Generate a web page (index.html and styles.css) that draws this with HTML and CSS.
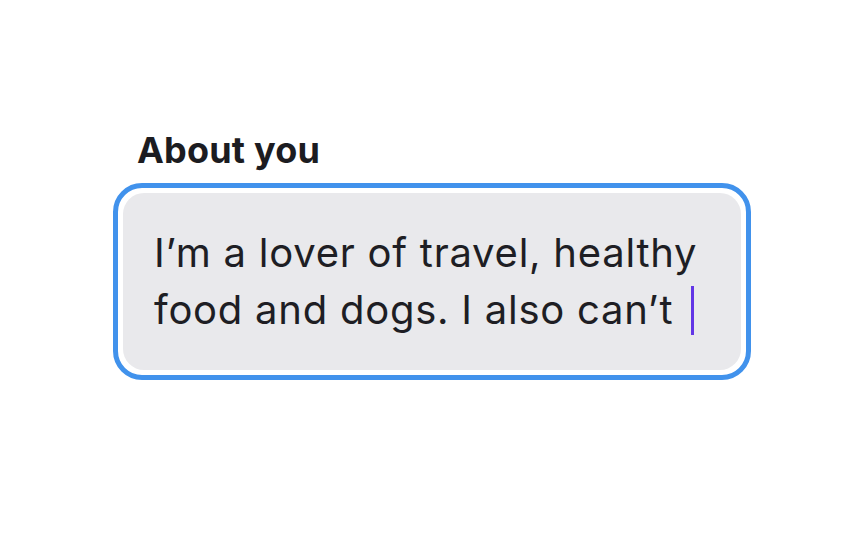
FILE: index.html
```html
<!DOCTYPE html>
<html lang="en">
<head>
<meta charset="utf-8">
<title>About you</title>
<link rel="stylesheet" href="styles.css">
</head>
<body>
<main class="page">
  <div class="field">
    <label class="label" for="about">About you</label>
    <div class="ring">
      <div class="input" id="about">I’m a lover of travel, healthy<br>food and dogs. I also can’t <span class="caret"></span></div>
    </div>
  </div>
</main>
</body>
</html>
```
FILE: styles.css
```css
html, body {
  margin: 0;
  padding: 0;
  background: #ffffff;
}
.page {
  width: 864px;
  height: 540px;
  display: flex;
  justify-content: center;
  padding-top: 130px;
  box-sizing: border-box;
  font-family: Inter, "Noto Sans", sans-serif;
}
.field {
  width: 638px;
  display: flex;
  flex-direction: column;
}
.label {
  display: block;
  font-size: 36px;
  font-weight: 700;
  line-height: 40px;
  color: #1c1c21;
  padding-left: 24px;
  margin-bottom: 13px;
  letter-spacing: 0.2px;
}
.ring {
  border: 5px solid #4192ec;
  border-radius: 29px;
  padding: 5px;
  background: #ffffff;
}
.input {
  background: #e9e9ec;
  border-radius: 21px;
  padding: 31px 30px 32px 31px;
  font-size: 40px;
  line-height: 57px;
  color: #1e1e24;
  font-weight: 400;
  letter-spacing: 0.75px;
}
.caret {
  display: inline-block;
  width: 3px;
  height: 49px;
  background: #6236e6;
  vertical-align: -11px;
  margin-left: 6px;
}
```
